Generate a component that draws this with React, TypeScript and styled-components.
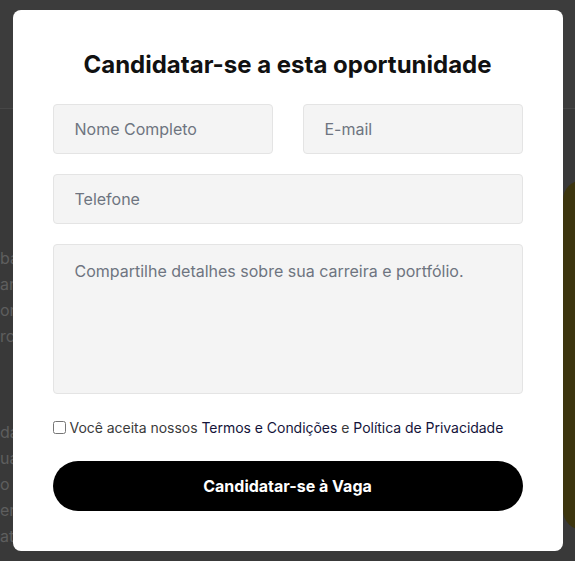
import React from "react";
import styled, { createGlobalStyle } from "styled-components";

const GlobalStyle = createGlobalStyle`
  * { box-sizing: border-box; }
  html, body { margin: 0; padding: 0; }
  body {
    font-family: Inter, "Noto Sans", Arial, sans-serif;
    background: #393939;
    overflow: hidden;
  }
`;

const Page = styled.div`
  width: 575px;
  height: 561px;
  overflow: hidden;
  background: #393939;
  display: flex;
  flex-direction: column;
`;

const Header = styled.header`
  height: 109px;
  flex: none;
  background: #3c3c3c;
  border-bottom: 1px solid #474747;
`;

const Main = styled.main`
  display: flex;
  justify-content: space-between;
  align-items: flex-start;
`;

const TextColumn = styled.div`
  padding-top: 136px;
  display: flex;
  flex-direction: column;
  gap: 70px;
`;

const Paragraph = styled.p`
  margin: 0;
  font-size: 16px;
  line-height: 26px;
  color: #5e5e5e;
  display: flex;
  flex-direction: column;
`;

const YellowCard = styled.div`
  width: 40px;
  height: 350px;
  margin-top: 71px;
  margin-right: -28px;
  background: #3c350e;
  border-radius: 20px 0 0 20px;
`;

const Overlay = styled.div`
  position: fixed;
  inset: 0;
  display: flex;
  align-items: center;
  justify-content: center;
`;

const Modal = styled.div`
  width: 550px;
  height: 541px;
  background: #ffffff;
  border-radius: 8px;
  padding: 40px;
  display: flex;
  flex-direction: column;
`;

const Title = styled.h2`
  margin: 0 0 24px;
  font-size: 24px;
  line-height: 30px;
  font-weight: 700;
  color: #111111;
  text-align: center;
`;

const Form = styled.form`
  display: flex;
  flex-direction: column;
  gap: 20px;
`;

const Row = styled.div`
  display: grid;
  grid-template-columns: 1fr 1fr;
  gap: 30px;
`;

const fieldStyles = `
  width: 100%;
  background: #f4f4f4;
  border: 1px solid #e4e4e4;
  border-radius: 4px;
  font-family: Inter, "Noto Sans", Arial, sans-serif;
  font-size: 16px;
  color: #222;
  outline: none;
  &::placeholder { color: #6e7480; opacity: 1; }
`;

const Input = styled.input`
  ${fieldStyles}
  height: 50px;
  padding: 0 21px;
`;

const TextArea = styled.textarea`
  ${fieldStyles}
  height: 150px;
  padding: 15px 21px;
  line-height: 22px;
  resize: none;
`;

const Terms = styled.label`
  margin-top: 5px;
  display: flex;
  align-items: center;
  gap: 4px;
  font-size: 14px;
  line-height: 17px;
  letter-spacing: -0.03px;
  color: #3b3b3b;
`;

const Check = styled.input`
  margin: 0;
  width: 13px;
  height: 13px;
`;

const Link = styled.span`
  color: #14143a;
`;

const Button = styled.button`
  margin-top: 5px;
  height: 50px;
  width: 100%;
  border: none;
  border-radius: 25px;
  background: #000000;
  color: #ffffff;
  font-family: Inter, "Noto Sans", Arial, sans-serif;
  font-size: 16px;
  font-weight: 700;
  cursor: pointer;
`;

export default function App() {
  return (
    <>
      <GlobalStyle />
      <Page>
        <Header />
        <Main>
          <TextColumn>
            <Paragraph>
              <span>balho</span>
              <span>ar em</span>
              <span>onal</span>
              <span>rcado</span>
            </Paragraph>
            <Paragraph>
              <span>dade</span>
              <span>ualquer</span>
              <span>o (</span>
              <span>erdade</span>
              <span>ato</span>
            </Paragraph>
          </TextColumn>
          <YellowCard />
        </Main>
      </Page>
      <Overlay>
        <Modal>
          <Title>Candidatar-se a esta oportunidade</Title>
          <Form onSubmit={(e) => e.preventDefault()}>
            <Row>
              <Input placeholder="Nome Completo" />
              <Input placeholder="E-mail" />
            </Row>
            <Input placeholder="Telefone" />
            <TextArea placeholder="Compartilhe detalhes sobre sua carreira e portfólio." />
            <Terms>
              <Check type="checkbox" />
              <span>
                Você aceita nossos <Link>Termos e Condições</Link> e{" "}
                <Link>Política de Privacidade</Link>
              </span>
            </Terms>
            <Button type="submit">Candidatar-se à Vaga</Button>
          </Form>
        </Modal>
      </Overlay>
    </>
  );
}
